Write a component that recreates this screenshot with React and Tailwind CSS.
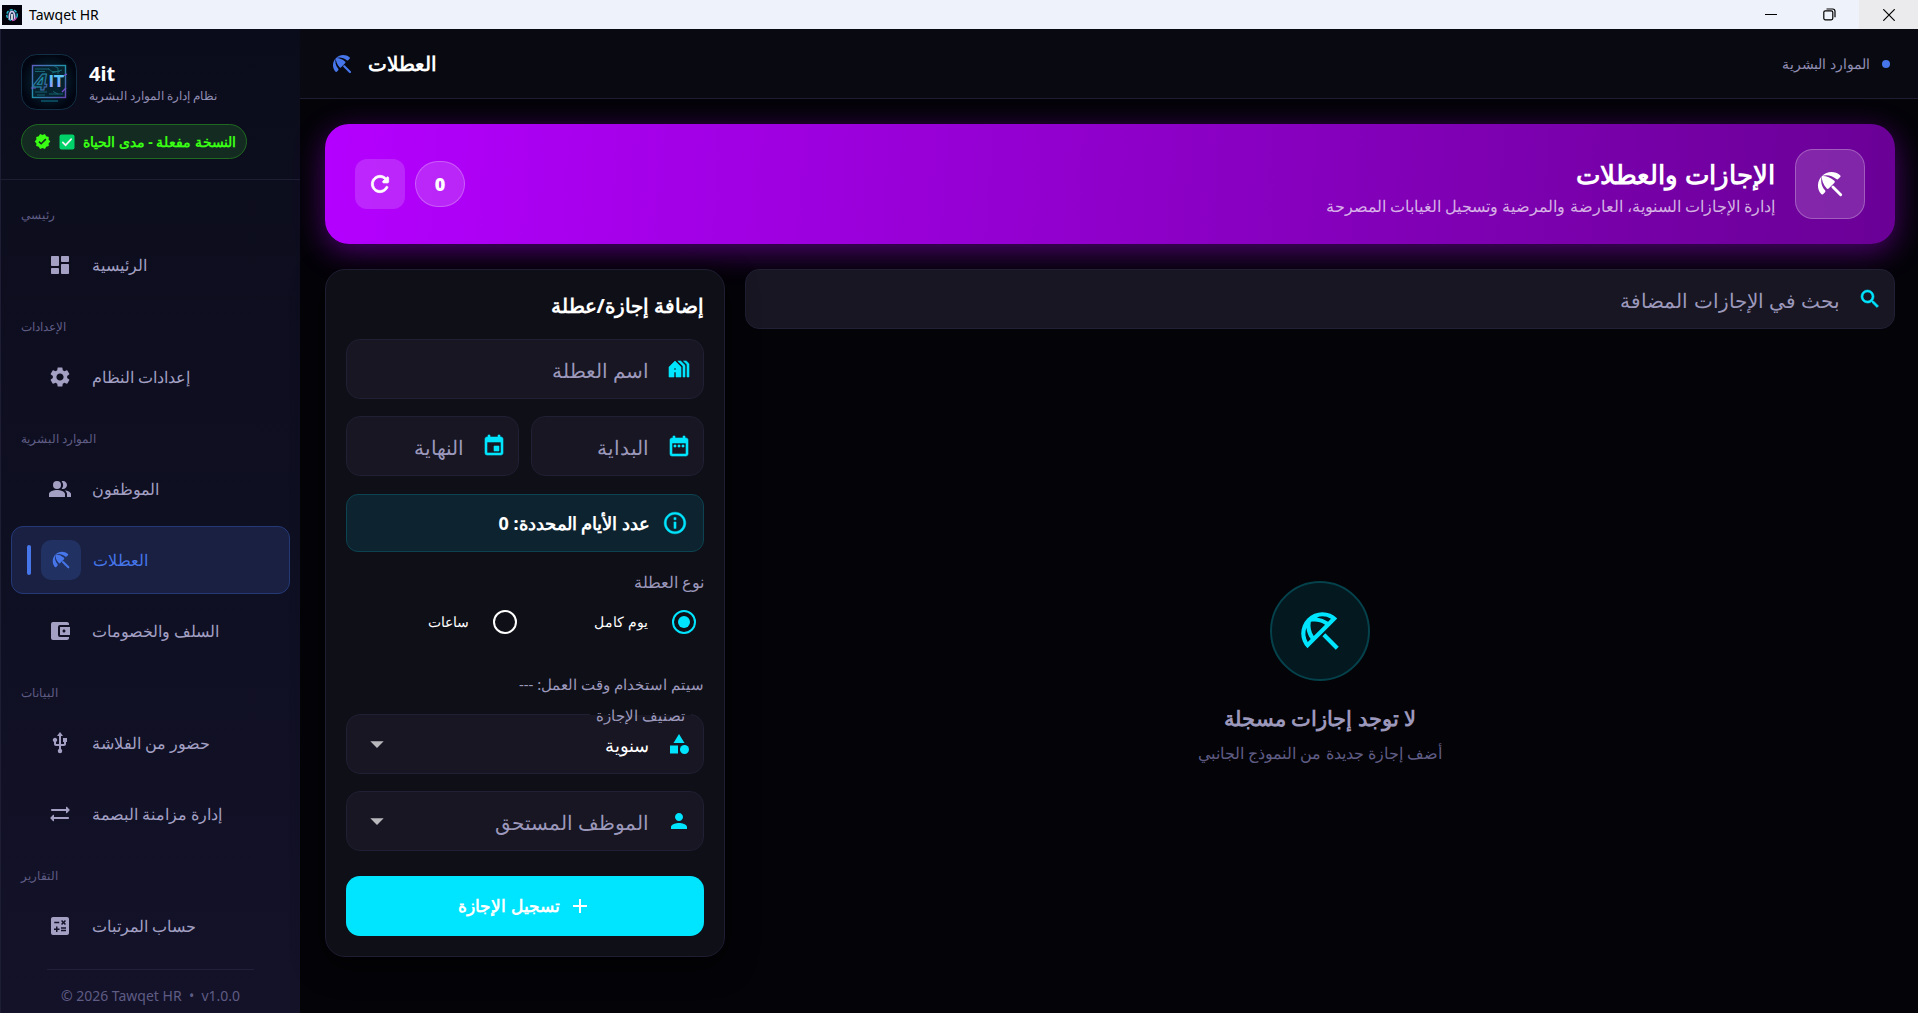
import React from "react";
import {
  MdSettings,
  MdPeopleAlt,
  MdAccountBalanceWallet,
  MdUsb,
  MdCalculate,
  MdVerified,
  MdSearch,
  MdHolidayVillage,
  MdDateRange,
  MdEvent,
  MdInfoOutline,
  MdCategory,
  MdPerson,
  MdAdd,
  MdArrowDropDown,
  MdOutlineBeachAccess,
} from "react-icons/md";

function Umbrella({ className }) {
  return (
    <svg viewBox="0 0 24 24" className={className} fill="currentColor" aria-hidden="true">
      <path d="M5.98 5.95c3.74-3.74 9.7-3.93 13.6-.6.42.37.44 1.02.05 1.41l-1.5 1.5c-.39.39-1.02.39-1.42.03C13.6 5.5 9.6 4.75 5.98 5.95z" />
      <path d="M5.95 5.98c-3.74 3.74-3.93 9.7-.6 13.6.37.42 1.02.44 1.41.05l1.5-1.5c.39-.39.39-1.02.03-1.42C5.5 13.6 4.75 9.6 5.95 5.98z" />
      <path d="M5.97 5.96l-.01.01c-.36 2.8.9 6.4 3.6 9.4.38.42 1.02.43 1.41.04l4.36-4.36c.39-.39.38-1.03-.04-1.41-3-2.7-6.5-3.96-9.32-3.68z" />
      <path d="M14.2 14.2l5.8 5.8" fill="none" stroke="currentColor" strokeWidth="2.2" strokeLinecap="round" />
    </svg>
  );
}

function DashboardIcon({ className }) {
  return (
    <svg viewBox="0 0 24 24" className={className} fill="currentColor" aria-hidden="true">
      <path d="M4 13h6c.55 0 1-.45 1-1V4c0-.55-.45-1-1-1H4c-.55 0-1 .45-1 1v8c0 .55.45 1 1 1zm0 8h6c.55 0 1-.45 1-1v-4c0-.55-.45-1-1-1H4c-.55 0-1 .45-1 1v4c0 .55.45 1 1 1zm10 0h6c.55 0 1-.45 1-1v-8c0-.55-.45-1-1-1h-6c-.55 0-1 .45-1 1v8c0 .55.45 1 1 1zM13 4v4c0 .55.45 1 1 1h6c.55 0 1-.45 1-1V4c0-.55-.45-1-1-1h-6c-.55 0-1 .45-1 1z" />
    </svg>
  );
}

function SyncIcon({ className }) {
  return (
    <svg viewBox="0 0 24 24" className={className} fill="currentColor" aria-hidden="true">
      <path d="M21.65 7.65l-2.79-2.79a.5.5 0 0 0-.86.35V7H4c-.55 0-1 .45-1 1s.45 1 1 1h14v1.79c0 .45.54.67.85.35l2.79-2.79c.2-.19.2-.51.01-.7z" />
      <path d="M2.35 16.35l2.79 2.79a.5.5 0 0 0 .86-.35V17h14c.55 0 1-.45 1-1s-.45-1-1-1H6v-1.79c0-.45-.54-.67-.85-.35l-2.79 2.79c-.2.19-.2.51-.01.7z" />
    </svg>
  );
}

function RefreshIcon({ className }) {
  return (
    <svg viewBox="0 0 24 24" className={className} fill="currentColor" stroke="currentColor" strokeWidth="0.7" aria-hidden="true">
      <path d="M17.65 6.35c-1.63-1.63-3.94-2.57-6.48-2.31-3.67.37-6.69 3.35-7.1 7.02C3.52 15.91 7.27 20 12 20c3.19 0 5.93-1.87 7.21-4.56.32-.67-.16-1.44-.9-1.44-.37 0-.72.2-.88.53-1.13 2.43-3.84 3.97-6.8 3.31-2.22-.49-4.01-2.3-4.48-4.52C5.31 9.44 8.26 6 12 6c1.66 0 3.14.69 4.22 1.78l-1.51 1.51c-.63.63-.19 1.71.7 1.71H19c.55 0 1-.45 1-1V6.41c0-.89-1.08-1.34-1.71-.71l-.64.65z" />
    </svg>
  );
}

function Logo() {
  return (
    <svg viewBox="0 0 56 56" className="size-14 shrink-0" role="img" aria-label="4IT">
      <defs>
        <radialGradient id="logoBg">
          <stop offset="0" stopColor="#0a3347" />
          <stop offset="0.65" stopColor="#041624" />
          <stop offset="1" stopColor="#020612" />
        </radialGradient>
        <linearGradient id="logoLine" x1="0" y1="0" x2="1" y2="1">
          <stop offset="0" stopColor="#5b5fc0" />
          <stop offset="0.5" stopColor="#1f93a8" />
          <stop offset="1" stopColor="#6b45b5" />
        </linearGradient>
        <linearGradient id="logoIt" x1="0" y1="0" x2="0" y2="1">
          <stop offset="0" stopColor="#3fd8f5" />
          <stop offset="1" stopColor="#a98bff" />
        </linearGradient>
      </defs>
      <rect x="0.5" y="0.5" width="55" height="55" rx="15" fill="url(#logoBg)" stroke="#123044" />
      <rect x="11.5" y="11.5" width="33" height="32" fill="#06222f" stroke="url(#logoLine)" strokeWidth="1.4" />
      <path d="M14 15h14M14 17.5h10M27 14.5l4 3h8M31 19l10-3M14 38h12M28 40h14M16 41h8M32 37.5l5 2.5M37 20v-6l-4-2" fill="none" stroke="#176a78" strokeWidth="0.9" />
      <path d="M10 34h5M40 23l6-3M41 38l4-4" stroke="#7a4fd0" strokeWidth="1.2" />
      <path d="M20 47h17" stroke="#17a3c4" strokeWidth="1" opacity="0.7" />
      <text x="12" y="36" fontSize="22" fontWeight="700" fontStyle="italic" fontFamily="Inter, sans-serif" fill="#0b2d3b" stroke="url(#logoLine)" strokeWidth="1">4</text>
      <text x="28" y="33" fontSize="16" fontWeight="800" fontFamily="Inter, sans-serif" fill="url(#logoIt)">IT</text>
    </svg>
  );
}

function AppIcon() {
  return (
    <svg viewBox="0 0 20 20" className="size-5" aria-hidden="true">
      <rect width="20" height="20" fill="#02020c" />
      <circle cx="10" cy="10" r="5.3" fill="#12304a" stroke="#26c4d6" strokeWidth="1.3" strokeDasharray="3 1.4" />
      <path d="M7.5 14.5c-.5-3 0-8 2.5-8s3 5 2.5 8" fill="none" stroke="#d7c9f2" strokeWidth="1.6" />
      <path d="M10 9v6" stroke="#fff" strokeWidth="1.6" />
      <path d="M14.5 12.5c-1 2-2.5 3-4.5 3.2" fill="none" stroke="#c03fa8" strokeWidth="1.3" />
    </svg>
  );
}

const SECTIONS = [
  { title: "رئيسي", items: [{ label: "الرئيسية", Icon: DashboardIcon }] },
  { title: "الإعدادات", items: [{ label: "إعدادات النظام", Icon: MdSettings }] },
  {
    title: "الموارد البشرية",
    items: [
      { label: "الموظفون", Icon: MdPeopleAlt },
      { label: "العطلات", Icon: Umbrella, active: true },
      { label: "السلف والخصومات", Icon: MdAccountBalanceWallet },
    ],
  },
  {
    title: "البيانات",
    items: [
      { label: "حضور من الفلاشة", Icon: MdUsb },
      { label: "إدارة مزامنة البصمة", Icon: SyncIcon },
    ],
  },
  { title: "التقارير", items: [{ label: "حساب المرتبات", Icon: MdCalculate }] },
];

function NavItem({ label, Icon, active }) {
  if (active) {
    return (
      <a href="#" aria-current="page" className="flex h-[68px] items-center rounded-xl border border-[#243a78] bg-[#192042] pl-[15px] font-medium text-[#4676ea]">
        <span className="h-[30px] w-1 rounded-sm bg-[#4676ea]" />
        <span className="ml-[10px] flex size-10 items-center justify-center rounded-[10px] bg-[#213162]">
          <Icon className="size-[22px]" />
        </span>
        <span dir="rtl" className="ml-3 text-base">{label}</span>
      </a>
    );
  }
  return (
    <a href="#" className="flex h-[68px] items-center pl-[29px] font-medium text-[#a3a0c4]">
      <span className="flex size-10 items-center justify-center">
        <Icon className="size-6" />
      </span>
      <span dir="rtl" className="ml-3 text-base">{label}</span>
    </a>
  );
}

function Sidebar() {
  return (
    <aside className="flex w-[300px] shrink-0 flex-col border-l border-[#1d1d33] bg-linear-to-b from-[#0b0c1b] to-[#131229]">
      <div className="flex flex-col gap-[14px] border-b border-[#1e1e33] px-5 pt-[25px] pb-5">
        <div className="flex items-center gap-3">
          <Logo />
          <div className="pt-1">
            <div className="text-xl leading-6 font-bold text-white">4it</div>
            <div dir="rtl" className="text-xs leading-5 text-[#918eb4]">نظام إدارة الموارد البشرية</div>
          </div>
        </div>
        <div className="flex h-[35px] items-center gap-2 self-start rounded-full border border-[#1f6a20] bg-[#132b20] pr-[10px] pl-3 text-[#39ff14]">
          <MdVerified className="size-[17px]" />
          <svg viewBox="0 0 16 16" className="size-4" aria-hidden="true">
            <rect x="0.5" y="0.5" width="15" height="15" rx="2" fill="#00d26a" />
            <path d="M3.8 8.4l2.8 2.8 5.6-6" fill="none" stroke="#f4f4f4" strokeWidth="1.7" strokeLinecap="round" />
          </svg>
          <span dir="rtl" className="text-sm font-bold">النسخة مفعلة - مدى الحياة</span>
        </div>
      </div>
      <nav className="flex flex-col gap-3 px-[10px] pt-[19px]">
        {SECTIONS.map((s) => (
          <div key={s.title} className="flex flex-col">
            <h2 className="flex h-8 items-center pl-[10px] text-xs text-[#5f5c84]">
              <span dir="rtl">{s.title}</span>
            </h2>
            <div className="flex flex-col gap-[3px]">
              {s.items.map((i) => (
                <NavItem key={i.label} {...i} />
              ))}
            </div>
          </div>
        ))}
      </nav>
      <footer className="mx-[46px] mt-auto flex h-11 shrink-0 items-center justify-center border-t border-[#21203a] pt-2 text-sm whitespace-pre text-[#5f5c84]">
        © 2026 Tawqet HR  •  v1.0.0
      </footer>
    </aside>
  );
}

const FIELD =
  "flex h-15 w-full items-center rounded-[14px] border border-[#201f33] bg-[#171622]";

function TextField({ id, label, Icon }) {
  return (
    <label htmlFor={id} className={FIELD + " min-w-0 gap-[18px] pr-3"}>
      <Icon className="size-6 shrink-0 stroke-[0.6] text-[#00e5ff] [&>path[fill=none]]:stroke-none" />
      <input
        id={id}
        type="text"
        aria-label={label}
        placeholder={label}
        className="h-full w-full min-w-0 bg-transparent pt-0.5 text-xl text-white outline-none placeholder:text-[#9c98bb]"
      />
    </label>
  );
}

function Radio({ label, checked }) {
  return (
    <label className="flex flex-1 items-center gap-6 pr-2 text-sm text-white">
      <input
        type="radio"
        name="leave-kind"
        defaultChecked={checked}
        className="size-6 shrink-0 appearance-none rounded-full border-2 border-white bg-clip-content p-1 checked:border-[#00e5ff] checked:bg-[#00e5ff]"
      />
      {label}
    </label>
  );
}

function LeaveForm() {
  return (
    <form className="flex w-[400px] shrink-0 flex-col self-start rounded-[20px] border border-[#1e1d31] bg-[#0f0f18] px-5 pt-4 pb-5 shadow-[0_8px_30px_rgba(0,0,0,0.8)]">
      <h2 className="h-[53px] text-xl leading-10 font-bold text-white">إضافة إجازة/عطلة</h2>
      <TextField id="name" label="اسم العطلة" Icon={MdHolidayVillage} />
      <div className="mt-[17px] grid grid-cols-2 gap-3">
        <TextField id="start" label="البداية" Icon={MdDateRange} />
        <TextField id="end" label="النهاية" Icon={MdEvent} />
      </div>
      <div className="mt-[18px] flex h-[58px] items-center gap-3 rounded-xl border border-[#0c4350] bg-[#0d232f] px-[15px] text-lg font-bold text-white">
        <MdInfoOutline className="size-[26px] stroke-[0.4] text-[#00e5ff] [&>path[fill=none]]:stroke-none" />
        عدد الأيام المحددة: 0
      </div>
      <fieldset className="mt-[18px]">
        <legend className="text-base leading-6 font-medium text-[#9c98bb]">نوع العطلة</legend>
        <div className="mt-[14px] flex h-7 items-center">
          <Radio label="يوم كامل" checked />
          <Radio label="ساعات" />
        </div>
      </fieldset>
      <p className="mt-9 h-[42px] text-[15px] leading-6 text-[#9c98bb]">سيتم استخدام وقت العمل: ---</p>
      <div className={FIELD + " relative"}>
        <label htmlFor="category" className="absolute -top-3 right-3 bg-linear-to-b from-[#0f0f18] from-50% to-[#171622] to-50% px-1.5 text-[15px] leading-6 text-[#9c98bb]">
          تصنيف الإجازة
        </label>
        <MdCategory className="pointer-events-none absolute right-3 size-6 text-[#00e5ff]" />
        <select id="category" className="h-full w-full appearance-none bg-transparent pt-0.5 pr-[54px] text-lg text-white outline-none">
          <option>سنوية</option>
        </select>
        <MdArrowDropDown className="pointer-events-none absolute left-[14px] size-8 text-[#b9b9bd]" />
      </div>
      <div className={FIELD + " relative mt-[17px]"}>
        <MdPerson className="pointer-events-none absolute right-3 size-6 text-[#00e5ff]" />
        <select aria-label="الموظف المستحق" className="h-full w-full appearance-none bg-transparent pt-1 pr-[54px] text-xl text-[#9c98bb] outline-none">
          <option>الموظف المستحق</option>
        </select>
        <MdArrowDropDown className="pointer-events-none absolute left-[14px] size-8 text-[#b9b9bd]" />
      </div>
      <button type="button" className="mt-[25px] flex h-15 items-center justify-center gap-2 rounded-[14px] bg-[#00e5ff] text-[17px] font-bold text-white">
        <MdAdd className="size-6" />
        تسجيل الإجازة
      </button>
    </form>
  );
}

export default function App() {
  return (
    <div className="flex h-screen flex-col overflow-hidden bg-[#040308] font-['Noto_Sans',sans-serif]">
      <header className="flex h-[29px] shrink-0 items-center bg-[#eef3fb] pl-[2px] text-black">
        <AppIcon />
        <span className="ml-[7px] flex-1 text-sm">Tawqet HR</span>
        <button type="button" aria-label="Minimize" className="flex h-full w-[59px] items-center justify-center">
          <svg viewBox="0 0 12 12" className="size-3" stroke="currentColor"><path d="M0 5.5h12" /></svg>
        </button>
        <button type="button" aria-label="Restore" className="flex h-full w-[59px] items-center justify-center">
          <svg viewBox="0 0 13 13" className="size-[13px]" fill="none" stroke="currentColor" strokeWidth="1.2">
            <rect x="0.8" y="2.8" width="9" height="9" rx="1.5" />
            <path d="M3.5 1h6.2a2.3 2.3 0 0 1 2.3 2.3v6" />
          </svg>
        </button>
        <button type="button" aria-label="Close" className="flex h-full w-[59px] items-center justify-center bg-[#ebebed]">
          <svg viewBox="0 0 12 12" className="size-3" stroke="currentColor" strokeWidth="1.2"><path d="M0.3 0.3l11.4 11.4M11.7 0.3L0.3 11.7" /></svg>
        </button>
      </header>
      <div className="flex min-h-0 flex-1">
        <Sidebar />
        <main className="flex min-w-0 flex-1 flex-col">
          <div className="flex h-[70px] shrink-0 items-center justify-between border-b border-[#1e1d31] bg-[#090911] pr-7 pl-[30px]">
            <h1 className="flex items-center gap-[14px] text-xl font-bold text-white">
              <Umbrella className="size-6 text-[#4676ea]" />
              <span dir="rtl">العطلات</span>
            </h1>
            <div dir="rtl" className="flex items-center gap-3 text-sm text-[#918eb4]">
              <span className="size-2 rounded-full bg-[#4676ea]" />
              الموارد البشرية
            </div>
          </div>
          <div dir="rtl" className="flex min-h-0 flex-1 flex-col gap-[25px] pt-[25px] pr-[23px] pb-[55px] pl-[25px]">
            <section className="flex h-30 shrink-0 items-center rounded-3xl bg-linear-94/srgb from-[#b400ff] to-[#6a0096] px-[30px] shadow-[0_8px_30px_rgba(160,0,230,0.45)]">
              <span className="flex size-[70px] items-center justify-center rounded-[18px] border border-white/25 bg-white/15 text-white">
                <Umbrella className="size-8" />
              </span>
              <div className="mr-5 flex-1 pt-2">
                <h2 className="text-[26px] leading-9 font-extrabold text-white">الإجازات والعطلات</h2>
                <p className="text-base leading-7 text-white/70">إدارة الإجازات السنوية، العارضة والمرضية وتسجيل الغيابات المصرحة</p>
              </div>
              <span className="flex h-[46px] w-[50px] items-center justify-center rounded-full border border-white/25 bg-white/15 text-lg font-black text-white">0</span>
              <button type="button" aria-label="تحديث" className="mr-[10px] flex size-[50px] items-center justify-center rounded-xl bg-white/15 text-white">
                <RefreshIcon className="size-[26px]" />
              </button>
            </section>
            <div className="flex min-h-0 flex-1 gap-5">
              <section className="flex min-w-0 flex-1 flex-col">
                <TextField id="search" label="بحث في الإجازات المضافة" Icon={MdSearch} />
                <div className="flex flex-1 flex-col items-center pt-[252px]">
                  <span className="flex size-[100px] items-center justify-center rounded-full border-2 border-[#05414b] bg-[#04181f] text-[#00e5ff]">
                    <MdOutlineBeachAccess className="size-[50px]" />
                  </span>
                  <h3 className="mt-5 text-[21px] leading-[34px] font-bold text-[#9c98bb]">لا توجد إجازات مسجلة</h3>
                  <p className="mt-1 text-base leading-7 text-[#5f5c84]">أضف إجازة جديدة من النموذج الجانبي</p>
                </div>
              </section>
              <LeaveForm />
            </div>
          </div>
        </main>
      </div>
    </div>
  );
}
